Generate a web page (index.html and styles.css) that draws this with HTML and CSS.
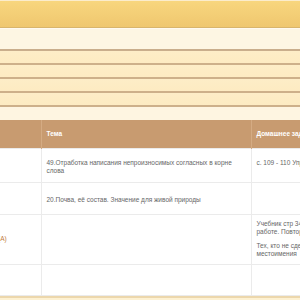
FILE: index.html
```html
<!DOCTYPE html>
<html lang="ru" dir="ltr">
<head>
<meta charset="utf-8">
<link rel="stylesheet" href="styles.css">
</head>
<body>
<div class="page">
  <div class="top-bar"></div>
  <div class="sub-bar"></div>
  <div class="stripes">
    <div class="stripe"></div>
    <div class="stripe"></div>
    <div class="stripe"></div>
    <div class="stripe"></div>
  </div>
  <div class="gap"></div>
  <table class="diary">
    <colgroup>
      <col class="c1"><col class="c2"><col class="c3">
    </colgroup>
    <thead>
      <tr><th></th><th>Тема</th><th>Домашнее задание</th></tr>
    </thead>
    <tbody>
      <tr class="r1"><td></td><td>49.Отработка написания непроизносимых согласных в корне слова</td><td>с. 109 - 110 Упр.</td></tr>
      <tr class="r2"><td></td><td>20.Почва, её состав. Значение для живой природы</td><td></td></tr>
      <tr class="r3"><td class="mark-cell"><span class="mark">(А)</span><span class="filler"></span></td><td></td><td><p>Учебник стр 34<br>работе. Повторить</p><p>Тех, кто не сделал<br>местоимения</p></td></tr>
      <tr class="r4"><td></td><td></td><td></td></tr>
    </tbody>
  </table>
  <div class="bottom"></div>
</div>
</body>
</html>
```
FILE: styles.css
```css
html, body {
  margin: 0;
  padding: 0;
  background: #ffffff;
}
.page {
  width: 300px;
  height: 300px;
  overflow: hidden;
  font-family: "Liberation Sans", Arial, sans-serif;
}
.top-bar {
  height: 26px;
  border-top: 1px solid #fbeccb;
  border-bottom: 1px solid #d8b56c;
  background: linear-gradient(#f8d67e, #efc76f);
}
.sub-bar {
  height: 20px;
  border-top: 1px solid #fffaf0;
  background: #fdf6e3;
  border-bottom: 2px solid #c9ae8c;
}
.stripe {
  height: 12px;
  background: linear-gradient(#fdedc7, #fdebc2);
  border-bottom: 2px solid #cdb08a;
}
.gap {
  height: 13px;
  background: #fef5e1;
}
.diary {
  width: 300px;
  border-collapse: collapse;
  table-layout: fixed;
  font-size: 6.5px;
  line-height: 8px;
  color: #666666;
}
.c1 { width: 41px; }
.c2 { width: 210px; }
.c3 { width: 49px; }
.diary thead tr { height: 28px; }
.diary th {
  background: #c89b70;
  color: #ffffff;
  font-weight: bold;
  text-align: left;
  padding: 0 5px;
  white-space: nowrap;
  overflow: hidden;
  border-right: 1px solid #d4ab83;
}
.diary td {
  border: 1px solid #ebebeb;
  vertical-align: top;
  text-align: left;
  padding: 9px 5px 0;
  overflow: hidden;
  white-space: nowrap;
}
.diary td:nth-child(2) { white-space: normal; padding-right: 8px; }
.diary td:first-child { border-left: none; }
.diary td:last-child { border-right: none; }
.r1 { height: 34px; }
.r2 { height: 32px; }
.r3 { height: 48px; }
.r4 { height: 31px; }
.r1 td { padding-top: 10px; }
.r2 td { padding-top: 13px; }
.r3 td { padding-top: 5px; }
.diary .mark-cell { padding: 20px 0 0 0; display: table-cell; }
.mark { display: inline-block; margin-left: -2px; color: #c0793c; }
.filler { display: inline-block; width: 26px; }
.diary p { margin: 0 0 6px; }
.bottom {
  height: 10px;
  border-top: 2px solid #ecd7ac;
  background: #fdf1d2;
}
```
